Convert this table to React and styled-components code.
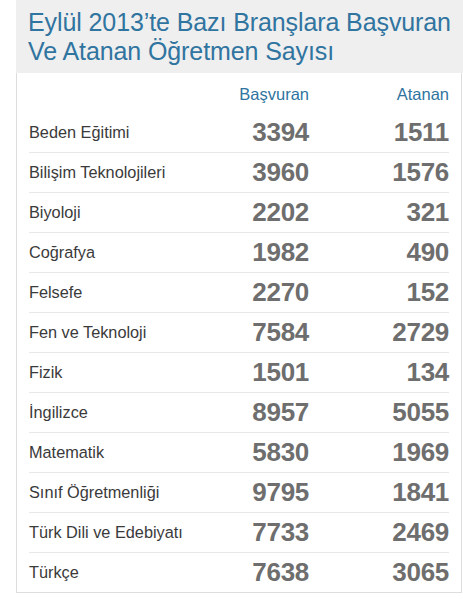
import React from 'react';
import styled, { createGlobalStyle } from 'styled-components';

const GlobalStyle = createGlobalStyle`
  body {
    margin: 0;
    background: #ffffff;
    font-family: "Liberation Sans", Arial, sans-serif;
  }
`;

const Wrapper = styled.div`
  margin-left: 16px;
  width: 447px;
`;

const Title = styled.h1`
  margin: 0;
  padding: 8px 0 7px 12px;
  background: #efefef;
  color: #3074a0;
  font-size: 25px;
  font-weight: normal;
  line-height: 29px;
  letter-spacing: -0.1px;
`;

const Panel = styled.div`
  width: 446px;
  box-sizing: border-box;
  border: 1px solid #dddddd;
  border-top: none;
  padding: 0 12px;
`;

const Row = styled.div`
  display: grid;
  grid-template-columns: 1fr 100px 140px;
  align-items: center;
  height: ${(p) => (p.head ? '40px' : '39px')};
  border-bottom: ${(p) => (p.last || p.head ? 'none' : '1px solid #e8e8e8')};
`;

const HeadCell = styled.div`
  text-align: right;
  color: #3074a0;
  font-size: 16.5px;
  padding-top: 2px;
`;

const Name = styled.div`
  color: #3a3a3a;
  font-size: 16.3px;
`;

const Num = styled.div`
  text-align: right;
  color: #6e6e6e;
  font-size: 26px;
  font-weight: bold;
  letter-spacing: -0.3px;
`;

const data = [
  ['Beden Eğitimi', 3394, 1511],
  ['Bilişim Teknolojileri', 3960, 1576],
  ['Biyoloji', 2202, 321],
  ['Coğrafya', 1982, 490],
  ['Felsefe', 2270, 152],
  ['Fen ve Teknoloji', 7584, 2729],
  ['Fizik', 1501, 134],
  ['İngilizce', 8957, 5055],
  ['Matematik', 5830, 1969],
  ['Sınıf Öğretmenliği', 9795, 1841],
  ['Türk Dili ve Edebiyatı', 7733, 2469],
  ['Türkçe', 7638, 3065],
];

export default function App() {
  return (
    <>
      <GlobalStyle />
      <Wrapper>
        <Title>
          Eylül 2013’te Bazı Branşlara Başvuran
          <br />
          Ve Atanan Öğretmen Sayısı
        </Title>
        <Panel>
          <Row head>
            <div />
            <HeadCell>Başvuran</HeadCell>
            <HeadCell>Atanan</HeadCell>
          </Row>
          {data.map(([name, a, b], i) => (
            <Row key={name} last={i === data.length - 1}>
              <Name>{name}</Name>
              <Num>{a}</Num>
              <Num>{b}</Num>
            </Row>
          ))}
        </Panel>
      </Wrapper>
    </>
  );
}
